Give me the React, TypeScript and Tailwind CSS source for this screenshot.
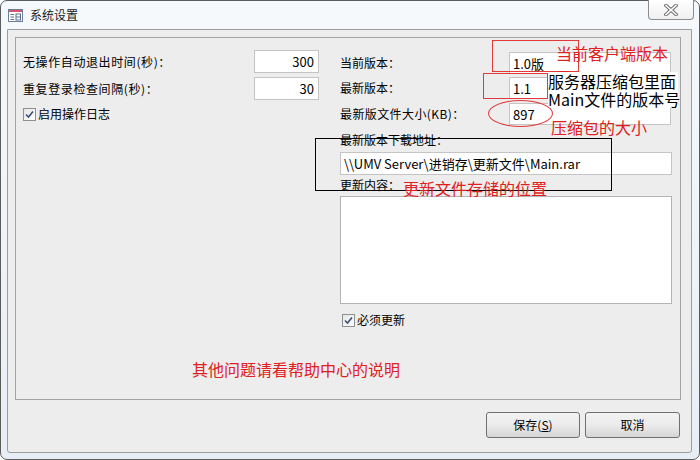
import React from "react";

function Check() {
  return (
    <span className="inline-block w-[13px] h-[13px] border border-[#8e8f8f] bg-gradient-to-br from-[#e6e6e6] to-[#ffffff] relative shrink-0">
      <svg className="absolute left-[1px] top-[1px]" width="9" height="9" viewBox="0 0 9 9">
        <path d="M1 4.5 L3.5 7 L8 1.5" stroke="#3a4f7a" strokeWidth="1.6" fill="none" />
      </svg>
    </span>
  );
}

function Input({ value, w, h = 22, right = false }: { value: string; w: number | string; h?: number; right?: boolean }) {
  return (
    <div
      className={
        "bg-white border border-[#c4c4c4] flex items-center text-[13px] leading-none shrink-0 whitespace-nowrap " +
        (right ? "justify-end pr-[4px]" : "pl-[3px]")
      }
      style={{ width: w, height: h }}
    >
      {value}
    </div>
  );
}

export default function App() {
  return (
    <div className="relative w-[700px] h-[460px] overflow-hidden bg-white font-['Noto_Sans_CJK_SC',sans-serif] text-[12px] text-black">
      <div className="w-[700px] h-[460px] rounded-[7px] border border-[#5c5c5c] bg-gradient-to-b from-[#f6f9fc] via-[#eef4f9] to-[#e7eef5] flex flex-col">
        {/* title bar */}
        <div className="h-[28px] flex items-center pl-[7px] gap-[7px] shrink-0">
          <svg width="15" height="13" viewBox="0 0 15 13">
            <rect x="0.5" y="0.5" width="14" height="12" fill="#ffffff" stroke="#6c7f9c" />
            <rect x="1" y="1" width="13" height="2" fill="#d8556a" />
            <path d="M2.5 5.5 H6 M2.5 8 H6 M2.5 10.5 H6" stroke="#5a6f92" strokeWidth="1" />
            <rect x="8" y="5" width="4.5" height="6" fill="none" stroke="#5a6f92" strokeWidth="1" />
            <path d="M8 8 H12.5" stroke="#5a6f92" strokeWidth="1" />
          </svg>
          <span className="text-[12px] leading-none text-[#1a1a1a]">系统设置</span>
        </div>
        {/* client area */}
        <div className="ml-[6px] w-[685px] h-[424px] border border-[#9d9d9d] rounded-b-[3px] bg-[#ededed] flex flex-col shrink-0">
          {/* group box */}
          <div className="ml-[7px] mt-[7px] w-[666px] h-[363px] border border-[#a3a3a3] flex">
            {/* left column */}
            <div className="ml-[7px] w-[296px] pt-[12px] flex flex-col">
              <div className="h-[23px] flex items-center">
                <span className="flex-1 leading-none tracking-[0.6px]">无操作自动退出时间(秒)：</span>
                <Input value="300" w={65} h={23} right />
              </div>
              <div className="h-[23px] mt-[4px] flex items-center">
                <span className="flex-1 leading-none tracking-[0.6px]">重复登录检查间隔(秒)：</span>
                <Input value="30" w={65} h={23} right />
              </div>
              <div className="h-[16px] mt-[6px] flex items-center gap-[2px]">
                <Check />
                <span className="leading-none">启用操作日志</span>
              </div>
            </div>
            {/* right column */}
            <div className="ml-[21px] w-[332px] pt-[14px] flex flex-col">
              <div className="h-[22px] flex items-center">
                <span className="w-[169px] leading-none">当前版本：</span>
                <Input value="1.0版" w={162} />
              </div>
              <div className="h-[22px] mt-[3px] flex items-center">
                <span className="w-[169px] leading-none">最新版本：</span>
                <Input value="1.1" w={162} />
              </div>
              <div className="h-[22px] mt-[4px] flex items-center">
                <span className="w-[169px] leading-none tracking-[0.4px]">最新版文件大小(KB)：</span>
                <Input value="897" w={162} />
              </div>
              <div className="h-[16px] mt-[7px] flex items-center leading-none">最新版本下载地址：</div>
              <div className="mt-[4px]">
                <Input value="\\UMV Server\进销存\更新文件\Main.rar" w={332} h={23} />
              </div>
              <div className="h-[16px] mt-[2px] flex items-center leading-none">更新内容：</div>
              <div className="mt-[3px] w-[332px] h-[108px] bg-white border border-[#b4b4b4]" />
              <div className="h-[16px] mt-[8px] ml-[2px] flex items-center gap-[2px]">
                <Check />
                <span className="leading-none">必须更新</span>
              </div>
            </div>
          </div>
          {/* buttons */}
          <div className="mt-[12px] pr-[11px] flex justify-end gap-[5px]">
            <button className="w-[94px] h-[26px] rounded-[3px] border border-[#707070] bg-gradient-to-b from-[#f2f2f2] via-[#ebebeb] to-[#d6d6d6] text-[12px] leading-none">
              保存(<span className="underline">S</span>)
            </button>
            <button className="w-[95px] h-[26px] rounded-[3px] border border-[#707070] bg-gradient-to-b from-[#f2f2f2] via-[#ebebeb] to-[#d6d6d6] text-[12px] leading-none">
              取消
            </button>
          </div>
        </div>
      </div>

      {/* close button */}
      <div className="absolute top-0 right-[6px] w-[46px] h-[20px] border border-t-0 border-[#8c8c8c] rounded-b-[4px] bg-gradient-to-b from-[#ffffff] to-[#f0f0f0] flex items-center justify-center">
        <svg width="14" height="12" viewBox="0 0 14 12">
          <path d="M2 1.5 L12 10.5 M12 1.5 L2 10.5" stroke="#6a6a6a" strokeWidth="3.6" strokeLinecap="square" />
          <path d="M2 1.5 L12 10.5 M12 1.5 L2 10.5" stroke="#ffffff" strokeWidth="1.6" strokeLinecap="square" />
        </svg>
      </div>

      {/* annotations */}
      <div className="absolute left-[492px] top-[40px] w-[87px] h-[32px] border border-[#e23a3a]" />
      <div className="absolute left-[556px] top-[41px] w-[118px] text-[16px] leading-[24px] text-[#e0201e]">
        当前客户端版本号
      </div>
      <div className="absolute left-[548px] top-[72px] w-[130px] h-[36px] bg-white text-[16px] leading-[18px] text-black whitespace-nowrap">
        服务器压缩包里面
        <br />
        Main文件的版本号
      </div>
      <div className="absolute left-[483px] top-[73px] w-[65px] h-[26px] border border-[#e23a3a]" />
      <div className="absolute left-[488px] top-[100px] w-[65px] h-[27px] rounded-[50%] border border-[#e23a3a]" />
      <div className="absolute left-[551px] top-[117px] text-[16px] leading-[20px] text-[#e0201e] whitespace-nowrap">压缩包的大小</div>
      <div className="absolute left-[315px] top-[138px] w-[297px] h-[53px] border border-black" />
      <div className="absolute left-[403px] top-[178px] text-[16px] leading-[20px] text-[#e0201e] whitespace-nowrap">更新文件存储的位置</div>
      <div className="absolute left-[192px] top-[359px] text-[16px] leading-[20px] text-[#e0201e] whitespace-nowrap">其他问题请看帮助中心的说明</div>
    </div>
  );
}
